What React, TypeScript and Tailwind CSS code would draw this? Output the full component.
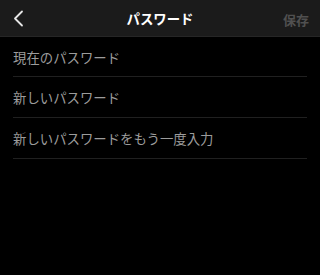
import React from "react";

export default function App() {
  const rows = ["現在のパスワード", "新しいパスワード", "新しいパスワードをもう一度入力"];
  return (
    <div
      className="w-[320px] h-[275px] bg-black overflow-hidden"
      style={{ fontFamily: '"Noto Sans CJK JP", "Noto Sans", sans-serif' }}
    >
      <div className="h-[37px] bg-[#1b1b1b] border-b border-[#262626] flex items-center justify-between px-[12px] relative">
        <svg width="11" height="17" viewBox="0 0 11 17" className="ml-[1px] mt-[1px]">
          <path d="M9 1.5 L2 8.5 L9 15.5" fill="none" stroke="#e6e6e6" strokeWidth="1.8" strokeLinecap="round" strokeLinejoin="round" />
        </svg>
        <div className="absolute left-0 right-0 top-[12px] text-center text-[13.4px] font-bold text-white leading-none pointer-events-none">
          パスワード
        </div>
        <div className="text-[13px] font-bold text-[#505050] leading-none mr-[-1px] mt-[2px]">保存</div>
      </div>
      <div className="px-[13px]">
        <div className="h-[40px] border-b border-[#202020] flex items-center pt-[2px] text-[13.4px] text-[#9c9c9c] leading-none">
          {rows[0]}
        </div>
        {rows.slice(1).map((r) => (
          <div
            key={r}
            className="h-[41px] border-b border-[#202020] flex items-center pt-[2px] text-[13.4px] text-[#9c9c9c] leading-none"
          >
            {r}
          </div>
        ))}
      </div>
    </div>
  );
}
